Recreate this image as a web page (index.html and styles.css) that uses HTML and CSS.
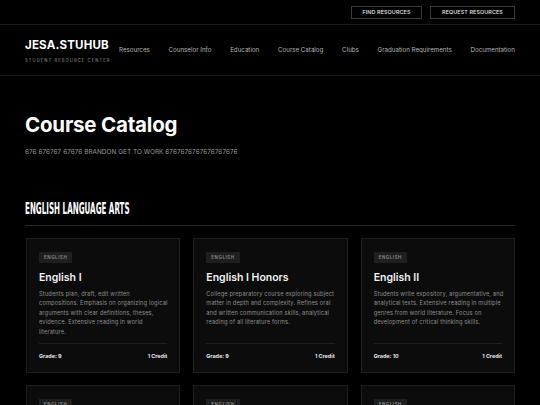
FILE: index.html
```html
<!DOCTYPE html>
<html lang="en">
<head>
    <meta charset="UTF-8">
    <meta name="viewport" content="width=device-width, initial-scale=1.0">
    <title>Course Catalog - JESA.STUHUB</title>
    <link rel="stylesheet" href="styles.css">
</head>
<body>
    <!-- Barra superior con accesos rapidos -->
    <div class="topBar">
        <a href="#" class="topButton">FIND RESOURCES</a>
        <a href="#" class="topButton">REQUEST RESOURCES</a>
    </div>

    <!-- Navegacion principal -->
    <header class="mainNav">
        <div class="brand">
            <div class="brandName">JESA.STUHUB</div>
            <div class="brandSub">STUDENT RESOURCE CENTER</div>
        </div>
        <nav class="navLinks">
            <a href="#">Resources</a>
            <a href="#">Counselor Info</a>
            <a href="#">Education</a>
            <a href="#">Course Catalog</a>
            <a href="#">Clubs</a>
            <a href="#">Graduation Requirements</a>
            <a href="#">Documentation</a>
        </nav>
    </header>

    <main class="content">
        <h1 class="pageTitle">Course Catalog</h1>
        <p class="pageIntro">676 676767 67676 BRANDON GET TO WORK 6767676767676767676</p>

        <section class="subject">
            <h2 class="subjectTitle"><span>ENGLISH LANGUAGE ARTS</span></h2>

            <div class="courseGrid">
                <div class="courseCard">
                    <span class="tag">ENGLISH</span>
                    <h3 class="courseName">English I</h3>
                    <p class="courseDesc">Students plan, draft, edit written compositions. Emphasis on organizing logical arguments with clear definitions, theses, evidence. Extensive reading in world literature.</p>
                    <div class="courseMeta">
                        <span>Grade: 9</span>
                        <span>1 Credit</span>
                    </div>
                </div>

                <div class="courseCard">
                    <span class="tag">ENGLISH</span>
                    <h3 class="courseName">English I Honors</h3>
                    <p class="courseDesc">College preparatory course exploring subject matter in depth and complexity. Refines oral and written communication skills, analytical reading of all literature forms.</p>
                    <div class="courseMeta">
                        <span>Grade: 9</span>
                        <span>1 Credit</span>
                    </div>
                </div>

                <div class="courseCard">
                    <span class="tag">ENGLISH</span>
                    <h3 class="courseName">English II</h3>
                    <p class="courseDesc">Students write expository, argumentative, and analytical texts. Extensive reading in multiple genres from world literature. Focus on development of critical thinking skills.</p>
                    <div class="courseMeta">
                        <span>Grade: 10</span>
                        <span>1 Credit</span>
                    </div>
                </div>

                <div class="courseCard">
                    <span class="tag">ENGLISH</span>
                </div>

                <div class="courseCard">
                    <span class="tag">ENGLISH</span>
                </div>

                <div class="courseCard">
                    <span class="tag">ENGLISH</span>
                </div>
            </div>
        </section>
    </main>
</body>
</html>
```

FILE: styles.css
```css
body {
    margin: 0;
    background-color: #000;
    color: #fff;
    font-family: Inter, "Noto Sans", sans-serif;
}

a {
    color: inherit;
    text-decoration: none;
}

.topBar {
    height: 24px;
    display: flex;
    justify-content: flex-end;
    align-items: center;
    gap: 8px;
    padding: 0 25px;
    border-bottom: 1px solid #1a1a1a;
}

.topButton {
    display: flex;
    align-items: center;
    justify-content: center;
    height: 11px;
    padding: 0 10px;
    border: 1px solid #3a3a3a;
    font-size: 5.4px;
    font-weight: 500;
    color: #e6e6e6;
    letter-spacing: 0.1px;
}

.topButton:first-child {
    width: 49px;
}

.topButton:last-child {
    width: 63px;
}

.mainNav {
    height: 50px;
    display: flex;
    align-items: center;
    padding: 0 25px;
    border-bottom: 1px solid #1a1a1a;
}

.brand {
    width: 94px;
    padding-top: 1px;
}

.brandName {
    font-size: 11.5px;
    font-weight: 700;
    letter-spacing: 0.2px;
    line-height: 14px;
}

.brandSub {
    margin-top: 6px;
    font-size: 4.2px;
    letter-spacing: 1.05px;
    color: #9a9a9a;
}

.navLinks {
    display: flex;
    flex: 1;
    justify-content: space-between;
    font-size: 6.2px;
    color: #b5b5b5;
    padding-bottom: 1px;
}

.content {
    padding: 0 25px;
}

.pageTitle {
    margin: 36px 0 0;
    font-size: 20.5px;
    font-weight: 700;
    line-height: 25px;
    letter-spacing: -0.2px;
}

.pageIntro {
    margin: 11px 0 0;
    font-size: 6.4px;
    color: #9a9a9a;
    letter-spacing: 0.05px;
}

.subject {
    margin-top: 44px;
}

.subjectTitle {
    margin: 0;
    padding-bottom: 7px;
    border-bottom: 1px solid #262626;
    font-family: "Liberation Sans Narrow", "DejaVu Sans Condensed", sans-serif;
    font-size: 15px;
    line-height: 18px;
    font-weight: 700;
}

.subjectTitle span {
    display: inline-block;
    transform: scale(0.53, 1);
    transform-origin: left center;
    white-space: nowrap;
}

.courseGrid {
    display: grid;
    grid-template-columns: repeat(3, 1fr);
    column-gap: 13px;
    row-gap: 12px;
    margin-top: 12px;
    padding-left: 1px;
}

.courseCard {
    display: flex;
    flex-direction: column;
    align-items: flex-start;
    height: 135px;
    padding: 13px 12px 0;
    background-color: #0c0c0c;
    border: 1px solid #1e1e1e;
    box-sizing: border-box;
}

.tag {
    display: inline-block;
    padding: 0 5px;
    height: 11px;
    line-height: 11px;
    background-color: #1f1f1f;
    color: #8a8a8a;
    font-size: 4.4px;
    font-weight: 600;
    letter-spacing: 0.6px;
}

.courseName {
    margin: 8px 0 0;
    font-size: 10.5px;
    font-weight: 600;
    line-height: 14px;
    color: #f2f2f2;
}

.courseDesc {
    margin: 4px -3px 0 0;
    font-size: 5.7px;
    line-height: 9.4px;
    letter-spacing: 0.14px;
    color: #8d8d8d;
}

.courseMeta {
    margin-top: auto;
    align-self: stretch;
    display: flex;
    justify-content: space-between;
    height: 28px;
    line-height: 24px;
    border-top: 1px solid #1f1f1f;
    font-size: 5.4px;
    font-weight: 700;
    color: #e6e6e6;
}
```
